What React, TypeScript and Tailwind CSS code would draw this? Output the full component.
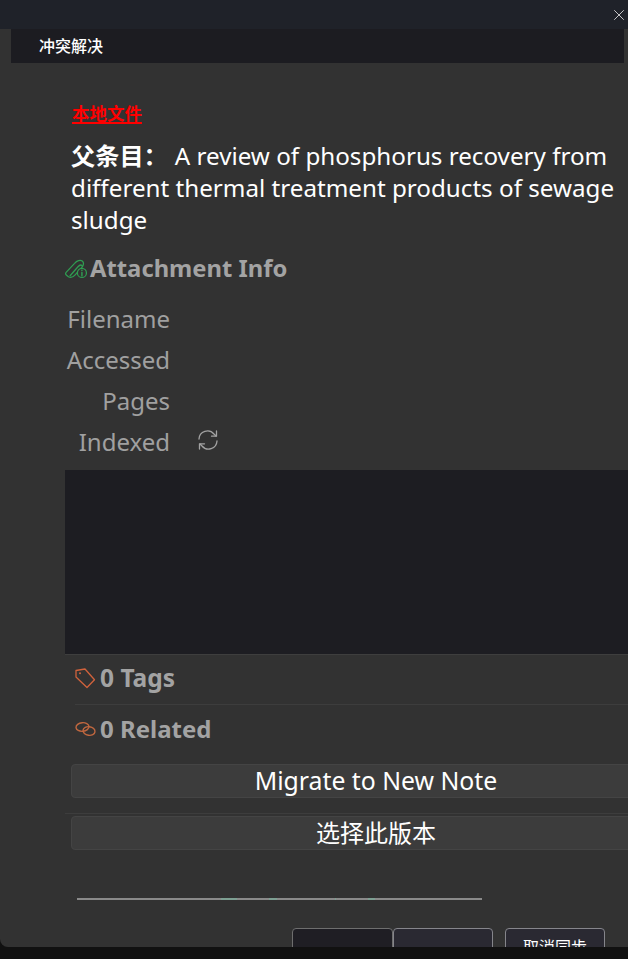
import { X } from 'lucide-react';

const SANS = "font-['Noto_Sans','Noto_Sans_CJK_SC',sans-serif]";

function AttachmentIcon() {
  return (
    <svg width="22" height="20" viewBox="0.500 1 19.500 17" fill="none" stroke="#2f9e52" strokeWidth="1.100" strokeLinecap="round" strokeLinejoin="round">
      <path d="M1.500 12.500 9 4.500c2-2.300 5-3.300 6.800-2 1.800 1.400 1.200 3.800-.6 5.900L9.500 14.700c-1.600 1.800-4 2.700-6 1.600-1.900-1.100-3.200-2.400-2-3.800Z" />
      <path d="M5 15.500 12 7.500c1.200-1.400 2.600-1.900 3.600-1.100" />
      <circle cx="15.500" cy="13" r="4" fill="#323232" />
      <path d="M15.500 12.500v3M15.500 10.600v.3" strokeWidth="1.300" />
    </svg>
  );
}

function TagIcon() {
  return (
    <svg width="21" height="21" viewBox="0 0 21 21" fill="none" stroke="#d0623c" strokeWidth="1.300" strokeLinejoin="round">
      <path d="M1 2.500 10 1l9.500 10.800-7.500 7.700L1 9Z" />
      <circle cx="5" cy="5.300" r="1" fill="#d0623c" stroke="none" />
    </svg>
  );
}

function RelatedIcon() {
  return (
    <svg width="21" height="16" viewBox="0 0 21 16" fill="none" stroke="#c0673f" strokeWidth="1.400">
      <ellipse cx="7.500" cy="6" rx="6.500" ry="4.300" transform="rotate(-5 7.500 6)" />
      <ellipse cx="14" cy="10" rx="6" ry="4.300" transform="rotate(8 14 10)" />
    </svg>
  );
}

function SyncIcon() {
  return (
    <svg width="22" height="22" viewBox="0 0 22 22" fill="none" stroke="#a3a3a3" strokeWidth="1.300" strokeLinecap="round" strokeLinejoin="round">
      <path d="M2 10a8.500 8.500 0 0 1 15-5l2 2" />
      <path d="M19.500 2v5.200h-5" />
      <path d="M20 12a8.500 8.500 0 0 1-15 5l-2-2" />
      <path d="M2.500 20v-5.200h5" />
    </svg>
  );
}

function InfoRow({ label, children }: { label: string; children?: React.ReactNode }) {
  return (
    <div className="flex h-[41px] items-center">
      <span className="w-[105px] text-right text-[24px] text-[#a0a0a0]">{label}</span>
      <span className="ml-[27px] flex -translate-y-[2px] items-center">{children}</span>
    </div>
  );
}

function ActionButton({ label, size }: { label: string; size: string }) {
  return (
    <button className={`ml-[6px] flex h-[34px] w-[610px] shrink-0 items-center justify-center rounded-[4px] border border-[#444444] bg-[#3c3c3c] text-white ${size}`}>
      {label}
    </button>
  );
}

export default function App() {
  return (
    <div className={`h-[959px] w-[628px] overflow-hidden bg-[#111111] ${SANS}`}>
      <div className="flex h-[947px] flex-col overflow-hidden rounded-bl-lg bg-[#323232]">
        {/* barra de titulo */}
        <div className="flex h-[29px] shrink-0 items-center justify-end bg-[#1f2229]">
          <X size={18} strokeWidth={1.200} className="text-[#d8d8d8]" />
        </div>

        <div className="ml-[11px] mr-[4px] flex h-[34px] shrink-0 items-center bg-[#1c1c21] pl-[28px] text-[16px] font-medium text-white">
          冲突解决
        </div>

        <div className="flex w-[700px] flex-1 flex-col pl-[65px]">
          <div className="ml-[7px] mt-[37px] text-[17.500px] font-bold leading-[26px] text-[#ff0000] underline decoration-2 underline-offset-2">本地文件</div>

          <p className="ml-[6px] mt-[14px] w-[556px] text-[24.200px] leading-[32px] text-white">
            <strong className="mr-[7px] font-bold">父条目：</strong>
            A review of phosphorus recovery from different thermal treatment products of sewage sludge
          </p>

          <div className="mt-[15px] flex h-[36px] items-center">
            <AttachmentIcon />
            <span className="ml-[3px] text-[23.800px] font-bold text-[#a3a3a3]">Attachment Info</span>
          </div>

          <div className="mt-[11px] flex flex-col">
            <InfoRow label="Filename" />
            <InfoRow label="Accessed" />
            <InfoRow label="Pages" />
            <InfoRow label="Indexed">
              <SyncIcon />
            </InfoRow>
          </div>

          <div className="mt-[8px] h-[185px] shrink-0 border-b border-[#3e3e3e] bg-[#1d1d22]" />

          <div className="ml-[10px] flex h-[50px] shrink-0 items-center border-b border-[#3d3d3d] pb-[2px]">
            <TagIcon />
            <span className="ml-[4px] text-[24.500px] font-bold text-[#a3a3a3]">0 Tags</span>
          </div>
          <div className="ml-[10px] flex h-[50px] shrink-0 items-center pb-[2px]">
            <RelatedIcon />
            <span className="ml-[4px] text-[24px] font-bold text-[#a3a3a3]">0 Related</span>
          </div>

          <div className="mt-[9px]">
            <ActionButton label="Migrate to New Note" size="text-[24.800px]" />
          </div>
          <div className="mt-[15px] border-t border-[#3d3d3d] pt-[2px]">
            <ActionButton label="选择此版本" size="text-[24px]" />
          </div>

          <div className="ml-[12px] mt-[48px] flex h-[2px] w-[405px] shrink-0 bg-[#8a8a8a]">
            <span className="ml-[144px] h-[2px] w-[16px] bg-[#7d9f92]" />
            <span className="ml-[32px] h-[2px] w-[8px] bg-[#7d9f92]" />
            <span className="ml-[58px] h-[2px] w-[1px] bg-[#7d9f92]" />
            <span className="ml-[32px] h-[2px] w-[7px] bg-[#7d9f92]" />
          </div>

          <div className="ml-[227px] mt-[28px] flex">
            <button className="h-[38px] w-[101px] shrink-0 rounded-[4px] border border-[#6e6e6e] bg-[#1f1e24]" />
            <button className="h-[38px] w-[100px] shrink-0 rounded-[4px] border border-[#85858b] bg-[#2a2932]" />
            <button className="ml-[12px] h-[38px] w-[100px] shrink-0 rounded-[4px] border border-[#85858b] bg-[#2a2932] text-[16px] text-white">
              取消同步
            </button>
          </div>
        </div>
      </div>
    </div>
  );
}
